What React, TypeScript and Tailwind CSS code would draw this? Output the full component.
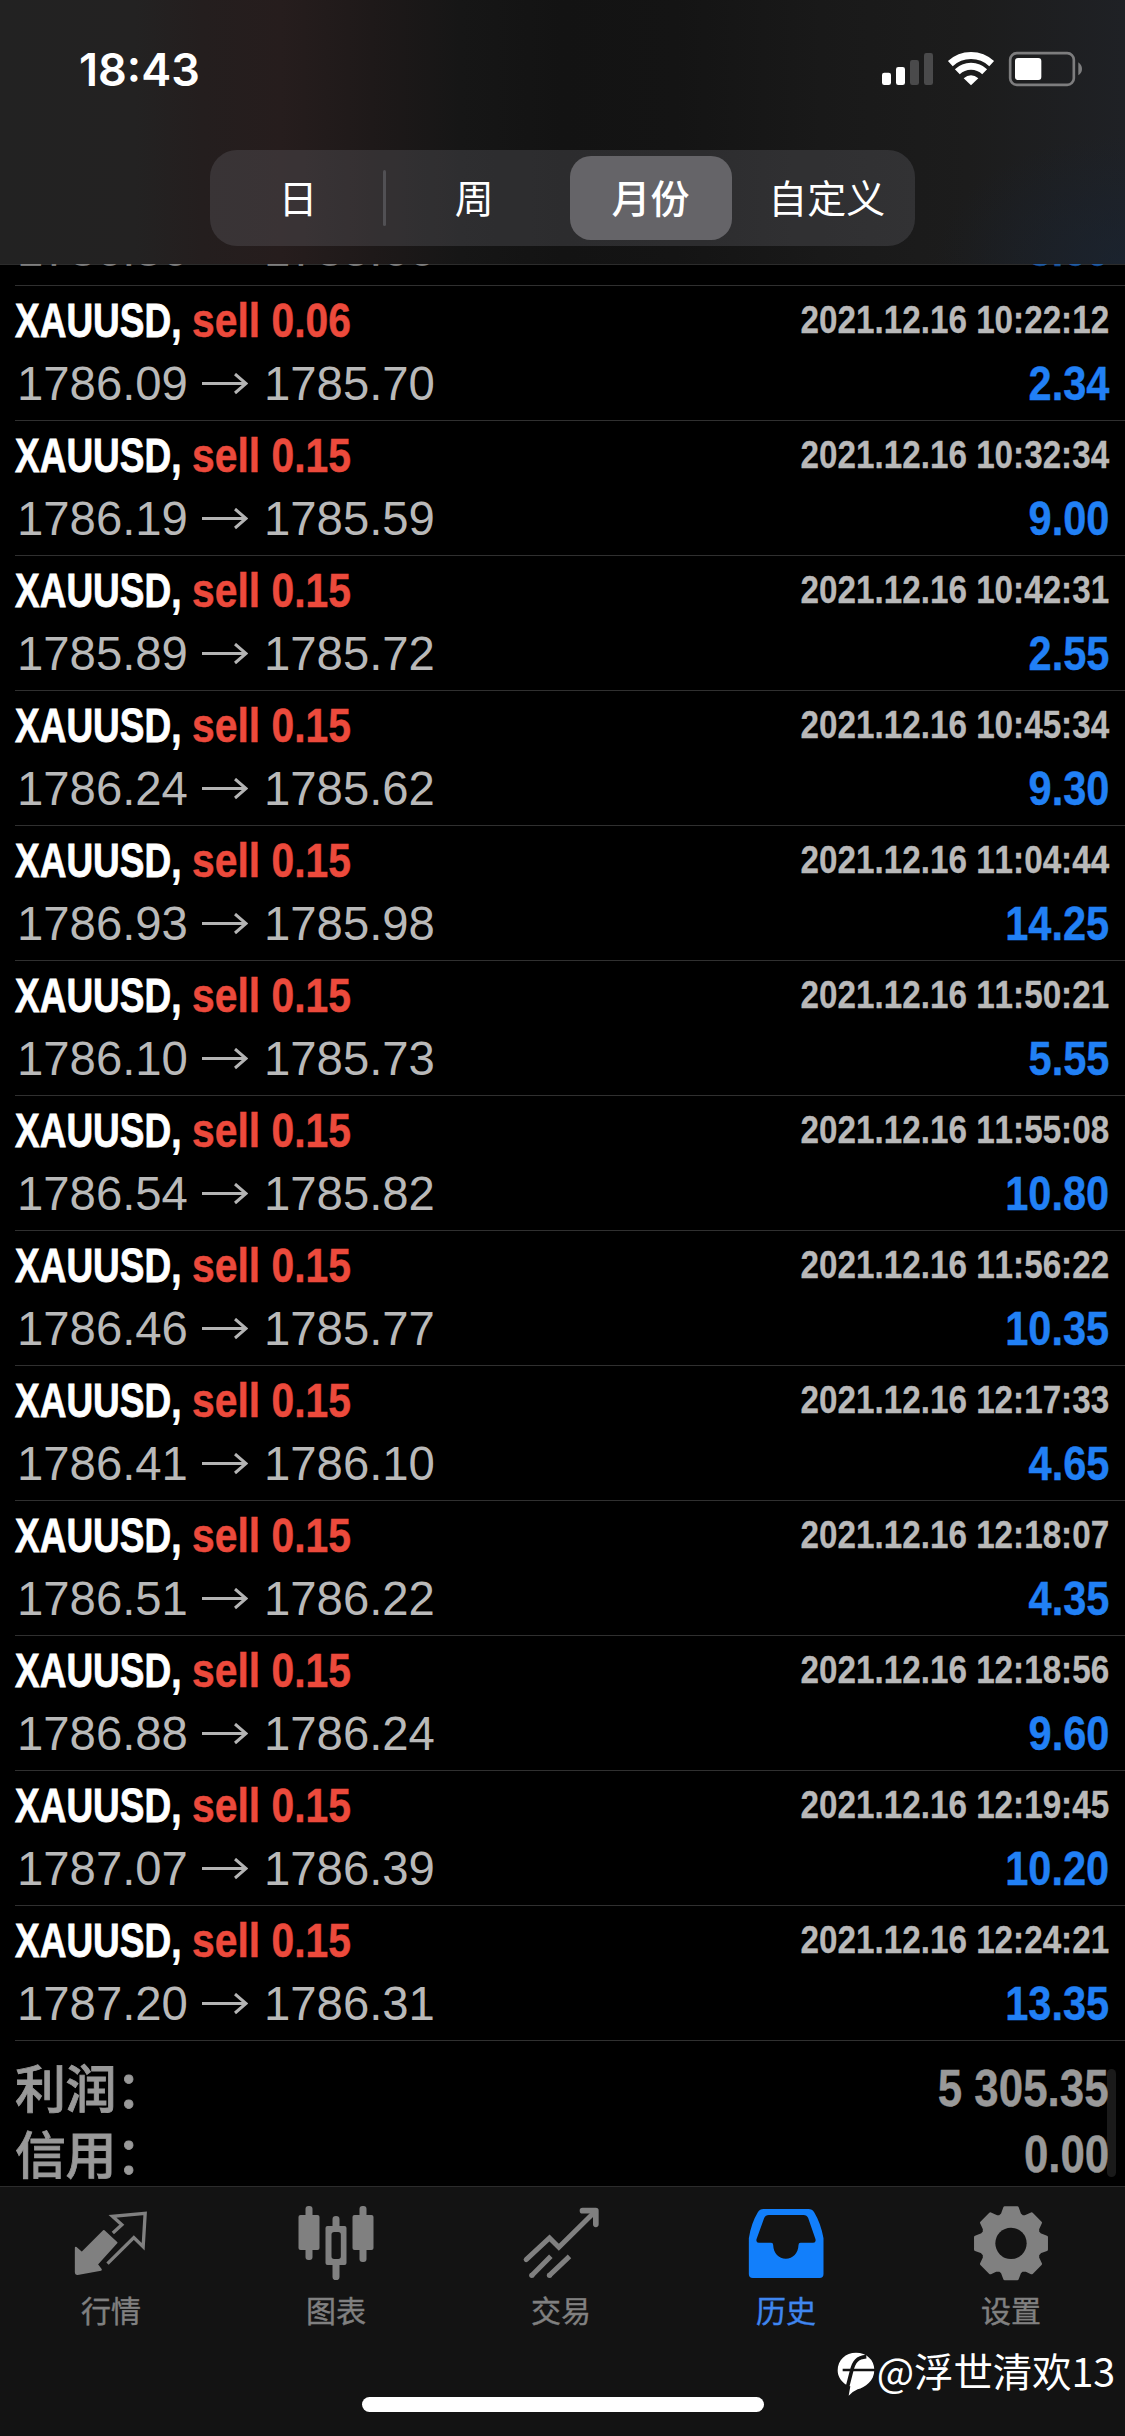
import type { ReactNode } from "react";

type Deal = { lot: string; open: string; close: string; time: string; profit: string };

const deals: Deal[] = [
  { lot: "0.06", open: "1786.36", close: "1785.66", time: "2021.12.16 10:20:08", profit: "3.60" },
  { lot: "0.06", open: "1786.09", close: "1785.70", time: "2021.12.16 10:22:12", profit: "2.34" },
  { lot: "0.15", open: "1786.19", close: "1785.59", time: "2021.12.16 10:32:34", profit: "9.00" },
  { lot: "0.15", open: "1785.89", close: "1785.72", time: "2021.12.16 10:42:31", profit: "2.55" },
  { lot: "0.15", open: "1786.24", close: "1785.62", time: "2021.12.16 10:45:34", profit: "9.30" },
  { lot: "0.15", open: "1786.93", close: "1785.98", time: "2021.12.16 11:04:44", profit: "14.25" },
  { lot: "0.15", open: "1786.10", close: "1785.73", time: "2021.12.16 11:50:21", profit: "5.55" },
  { lot: "0.15", open: "1786.54", close: "1785.82", time: "2021.12.16 11:55:08", profit: "10.80" },
  { lot: "0.15", open: "1786.46", close: "1785.77", time: "2021.12.16 11:56:22", profit: "10.35" },
  { lot: "0.15", open: "1786.41", close: "1786.10", time: "2021.12.16 12:17:33", profit: "4.65" },
  { lot: "0.15", open: "1786.51", close: "1786.22", time: "2021.12.16 12:18:07", profit: "4.35" },
  { lot: "0.15", open: "1786.88", close: "1786.24", time: "2021.12.16 12:18:56", profit: "9.60" },
  { lot: "0.15", open: "1787.07", close: "1786.39", time: "2021.12.16 12:19:45", profit: "10.20" },
  { lot: "0.15", open: "1787.20", close: "1786.31", time: "2021.12.16 12:24:21", profit: "13.35" },
];

function StatusIcons() {
  return (
    <svg className="h-[70px] w-[240px]" viewBox="0 0 720 210" fill="none">
      <rect x="66" y="113" width="27" height="37" rx="7" fill="#fff" />
      <rect x="108" y="96" width="27" height="54" rx="7" fill="#fff" />
      <rect x="150" y="75" width="27" height="75" rx="7" fill="#4a4a4b" />
      <rect x="192" y="54" width="27" height="96" rx="7" fill="#4a4a4b" />
      <path d="M271 86A91 91 0 0 1 395 86" stroke="#fff" strokeWidth="21" />
      <path d="M292 110.500A59 59 0 0 1 374 110.500" stroke="#fff" strokeWidth="21" />
      <path d="M333 151L311 130Q333 112 355 130Z" fill="#fff" />
      <rect x="450.500" y="54.500" width="191" height="95" rx="20" stroke="#7d7d7e" strokeWidth="8" />
      <rect x="465" y="69" width="79" height="66" rx="9" fill="#fff" />
      <path d="M655 82Q666 90 666 102Q666 114 655 121Z" fill="#7d7d7e" />
    </svg>
  );
}

const segments = ["日", "周", "月份", "自定义"];

function Header() {
  return (
    <header className="relative flex h-[264px] shrink-0 flex-col items-center bg-[radial-gradient(ellipse_190px_130px_at_100%_100%,#18243499_0%,transparent_100%),linear-gradient(90deg,#222222_0%,#232222_12%,#241e1e_18%,#261d1d_25%,#1e1919_33%,#161616_41%,#131313_50%,#141414_60%,#191919_73%,#1c1c1c_86%,#1f2125_100%)]">
      <div className="flex h-[150px] w-full justify-between pl-[79px] pr-[25px]">
        <span className="pt-[43px] font-['Inter',sans-serif] text-[45px] font-semibold leading-[54px] text-white">
          18:43
        </span>
        <div className="pt-[35px]">
          <StatusIcons />
        </div>
      </div>
      <div className="flex h-24 w-[705px] items-center rounded-[27px] bg-[#767680]/25">
        {segments.map((s, i) => (
          <div key={s} className="relative flex h-full flex-1 items-center justify-center px-[7px] py-1.5">
            {i === 0 && <div className="absolute right-0 top-5 h-[56px] w-[3px] rounded bg-[#515054]" />}
            <div
              className={
                i === 2
                  ? "flex h-full w-full items-center justify-center rounded-[21px] bg-[#656468] font-medium"
                  : "flex h-full items-center justify-center"
              }
            >
              <span className="mb-[4px] whitespace-nowrap text-[39px] leading-[58px] text-white">{s}</span>
            </div>
          </div>
        ))}
      </div>
    </header>
  );
}

function DealRow({ d, first }: { d: Deal; first: boolean }) {
  return (
    <div
      className={
        (first ? "-mt-[112px] h-[134px] " : "h-[135px] ") +
        "ml-[15px] shrink-0 border-b border-[#303030] pr-4 pt-1 font-['Liberation_Sans',Arial,sans-serif] [font-kerning:none]"
      }
    >
      <div className="flex justify-between whitespace-nowrap font-bold leading-[60px]">
        <div className="flex text-[49px]">
          <div className="w-[177px]">
            <span className="inline-block origin-left scale-x-[0.755] text-white [-webkit-text-stroke:0.8px]">
              XAUUSD,
            </span>
          </div>
          <span className="inline-block origin-left scale-x-[0.833] text-[#ec4a3c] [-webkit-text-stroke:0.5px]">
            sell {d.lot}
          </span>
        </div>
        <span className="inline-block origin-right scale-x-[0.852] text-[39px] text-[#b9b9b9] [-webkit-text-stroke:0.3px]">
          {d.time}
        </span>
      </div>
      <div
        className={
          (first ? "opacity-60 " : "") + "flex justify-between whitespace-nowrap text-[48px] leading-[67px]"
        }
      >
        <div className="flex items-center pl-[2px] text-[#b9b9b9]">
          <div className="w-[185px]">
            <span className="inline-block origin-left scale-x-[0.985]">{d.open}</span>
          </div>
          <svg className="h-[22px] w-[46px]" viewBox="0 0 46 22" fill="none" stroke="#b4b4b4" strokeWidth="3">
            <path d="M0 10.500H44M33 1L44 10.500L33 20" />
          </svg>
          <span className="ml-4 inline-block origin-left scale-x-[0.985]">{d.close}</span>
        </div>
        <span className="inline-block origin-right scale-x-[0.865] font-bold text-[#2180f5] [-webkit-text-stroke:0.4px]">
          {d.profit}
        </span>
      </div>
    </div>
  );
}

function Total({ label, value }: { label: string; value: string }) {
  return (
    <div className="flex h-[66px] shrink-0 items-center justify-between pl-[15px] pr-4 text-[#999999]">
      <span className="-mt-[2px] text-[51px] font-medium leading-[64px] tracking-[-0.5px] [-webkit-text-stroke:0.8px]">
        {label}
      </span>
      <span className="mt-1 inline-block origin-right scale-x-[0.86] font-['Liberation_Sans',Arial,sans-serif] text-[51px] font-bold leading-[60px] [-webkit-text-stroke:0.4px]">
        {value}
      </span>
    </div>
  );
}

function gearPoints(cx: number, cy: number) {
  const profile: [number, number][] = [
    [-22.5, 87],
    [-16.5, 91],
    [-10, 108],
    [10, 108],
    [16.5, 91],
  ];
  const pts: string[] = [];
  for (let k = 0; k < 8; k++) {
    for (const [a, r] of profile) {
      const t = ((k * 45 + a) * Math.PI) / 180;
      pts.push(`${(cx + Math.sin(t) * r).toFixed(1)},${(cy - Math.cos(t) * r).toFixed(1)}`);
    }
  }
  return pts.join(" ");
}

function Tab({ label, viewBox, active, children }: { label: string; viewBox: string; active?: boolean; children: ReactNode }) {
  return (
    <div className={"flex flex-1 flex-col items-center " + (active ? "text-[#127ffb]" : "text-[#808080]")}>
      <svg className="mr-[1px] h-[78px] w-[84px]" viewBox={viewBox} fill="none">
        {children}
      </svg>
      <span
        className={
          "mr-[3px] mt-[6px] text-[30px] leading-10 [-webkit-text-stroke:0.4px] " + (active ? "text-[#3f86f0]" : "")
        }
      >
        {label}
      </span>
    </div>
  );
}

function TabBar() {
  return (
    <nav className="relative flex h-[250px] shrink-0 flex-col items-center border-t border-[#2c2c2c] bg-[#131313] pt-[18px]">
      <div className="flex w-full">
        <Tab label="行情" viewBox="61.5 45 252 234">
          <path
            d="M163 123L201 158L142 223L154 239L84 252Q79 252 79 246V173L97 189Z"
            fill="currentColor"
            stroke="currentColor"
            strokeWidth="6"
            strokeLinejoin="round"
          />
          <path d="M190 129L217 104L189 79L287 70L281 170L253 143L174 221" stroke="currentColor" strokeWidth="10" />
        </Tab>
        <Tab label="图表" viewBox="736.5 45 252 234">
          <g fill="currentColor">
            <rect x="747" y="75" width="63" height="105" rx="6" />
            <rect x="768" y="48" width="21" height="162" rx="9" />
            <rect x="909" y="75" width="63" height="105" rx="6" />
            <rect x="930" y="48" width="21" height="168" rx="9" />
            <path
              fillRule="evenodd"
              d="M849 108V88Q849 78 859.500 78Q870 78 870 88V108H885Q891 108 891 114V219Q891 225 885 225H870V260Q870 270 859.500 270Q849 270 849 260V225H834Q828 225 828 219V114Q828 108 834 108ZM854 126Q846 126 846 134V199Q846 207 854 207H866Q874 207 874 199V134Q874 126 866 126Z"
            />
          </g>
        </Tab>
        <Tab label="交易" viewBox="61.5 45 252 234">
          <g stroke="currentColor" strokeWidth="15">
            <path d="M80 209L150 144L178 172L286 65" strokeLinecap="round" />
            <path d="M249 62H289V103" strokeWidth="17" strokeLinecap="round" strokeLinejoin="round" />
            <path d="M96 257L154 199M149 257L210 199" />
          </g>
          <circle cx="97" cy="256" r="8" fill="currentColor" />
          <circle cx="150" cy="256" r="8" fill="currentColor" />
        </Tab>
        <Tab label="历史" viewBox="736.5 45 252 234" active>
          <path
            fill="currentColor"
            fillRule="evenodd"
            d="M792 57H927Q938 57 944 67Q964 100 972 145V252Q972 264 960 264H760Q748 264 748 252V145Q755 100 775 67Q781 57 792 57ZM808 75Q798 75 794 84L771 148Q769 158 778 158H815Q821 158 821 165C822 190 838 206 859 206C880 206 896 190 897 165Q897 158 903 158H941Q950 158 948 148L926 84Q922 75 912 75Z"
          />
        </Tab>
        <Tab label="设置" viewBox="451.5 45 252 234">
          <polygon
            points={gearPoints(574.5, 160)}
            fill="currentColor"
            stroke="currentColor"
            strokeWidth="9"
            strokeLinejoin="round"
          />
          <circle cx="574.5" cy="160" r="47" fill="#131313" />
        </Tab>
      </div>
      <div className="mb-6 mt-auto h-[15px] w-[402px] rounded-full bg-white" />
      <div className="absolute right-[10px] top-[154px] flex items-start text-white">
        <svg className="mr-[-1px] mt-[10px] h-[48px] w-[43px]" viewBox="30 39 129 144" fill="none">
          <path
            d="M93 44C125 44 148 66 148 95C148 130 120 147 98 154Q84 160 71 173L76 145Q72 146 60 138C46 128 38 113 38 97C38 66 62 44 93 44Z"
            fill="#fff"
          />
          <path d="M66 152L80 98C86 72 96 58 124 56" stroke="#131313" strokeWidth="11" />
          <path d="M53 96H150" stroke="#131313" strokeWidth="7" />
        </svg>
        <span className="whitespace-nowrap text-[39.500px] leading-[58px] tracking-[-0.15px]">@浮世清欢13</span>
      </div>
    </nav>
  );
}

export default function App() {
  return (
    <div className="flex h-[2436px] w-[1125px] flex-col overflow-hidden bg-black font-['Noto_Sans_CJK_SC',sans-serif]">
      <Header />
      <main className="relative flex min-h-0 flex-1 flex-col overflow-hidden">
        <div className="absolute inset-x-0 top-0 h-px bg-[#2c2c2c]" />
        {deals.map((d, i) => (
          <DealRow key={d.time} d={d} first={i === 0} />
        ))}
        <div className="pt-[13px]">
          <Total label="利润：" value="5 305.35" />
          <Total label="信用：" value="0.00" />
        </div>
        <div className="absolute bottom-[9px] right-[9px] h-[108px] w-[9px] rounded-full bg-white/10" />
      </main>
      <TabBar />
    </div>
  );
}
